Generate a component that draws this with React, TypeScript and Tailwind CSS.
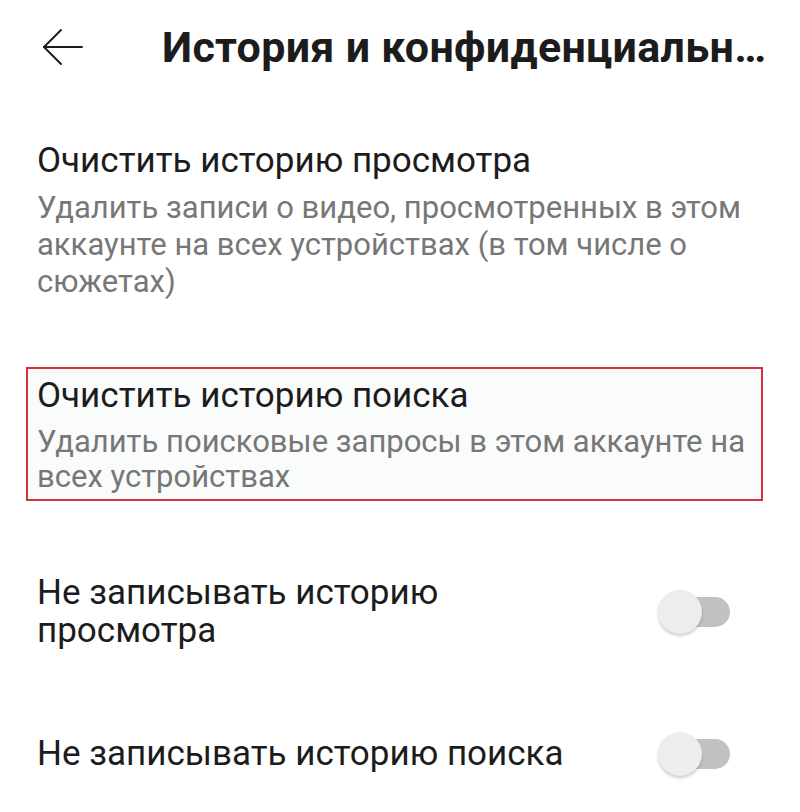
export default function App() {
  return (
    <main className="w-[800px] h-[812px] overflow-hidden bg-white text-[#1c1c1c] font-['Roboto','Liberation_Sans',sans-serif]">
      <header className="flex flex-row items-center h-[94px]">
        <button className="ml-[42px] w-[42px] h-[40px] flex items-center justify-center">
          <svg width="42" height="38" viewBox="0 0 42 38" fill="none" stroke="#1c1c1c" strokeWidth="2" strokeLinecap="round" strokeLinejoin="round">
            <path d="M2 19 H40" />
            <path d="M19 2 L2 19 L19 36" />
          </svg>
        </button>
        <h1 className="ml-[78px] w-[612px] truncate text-[43px] leading-[50px] font-bold tracking-[0.3px]">
          История и конфиденциальность
        </h1>
      </header>

      <section className="mt-[47px] px-[37px]">
        <p className="text-[35px] leading-[40px]">Очистить историю просмотра</p>
        <p className="mt-[8px] text-[31px] leading-[37px] text-[#777777] w-[720px]">
          Удалить записи о видео, просмотренных в этом аккаунте на всех устройствах (в том числе о сюжетах)
        </p>
      </section>

      <section className="mt-[67px] ml-[26px] w-[737px] border-2 border-[#d6303d] bg-[#fafbfb] pl-[9px] pt-[7px] pb-[5px]">
        <p className="text-[35px] leading-[40px]">Очистить историю поиска</p>
        <p className="mt-[8px] text-[31px] leading-[35px] text-[#777777] w-[720px]">
          Удалить поисковые запросы в этом аккаунте на всех устройствах
        </p>
      </section>

      <section className="mt-[73px] px-[37px] flex flex-row items-center justify-between">
        <p className="w-[560px] text-[35px] leading-[38px]">Не записывать историю просмотра</p>
        <Toggle />
      </section>

      <section className="mt-[82px] px-[37px] flex flex-row items-center justify-between">
        <p className="w-[560px] text-[35px] leading-[38px]">Не записывать историю поиска</p>
        <Toggle />
      </section>
    </main>
  )
}

const Toggle = () => {
  return (
    <div className="relative w-[72px] h-[44px] mr-[33px] flex items-center">
      <div className="ml-[16px] w-[56px] h-[30px] rounded-full bg-[#c2c2c2]" />
      <div className="absolute left-0 top-0 w-[44px] h-[44px] rounded-full bg-[#ededed] shadow-[0_2px_3px_rgba(0,0,0,0.2)]" />
    </div>
  )
}
